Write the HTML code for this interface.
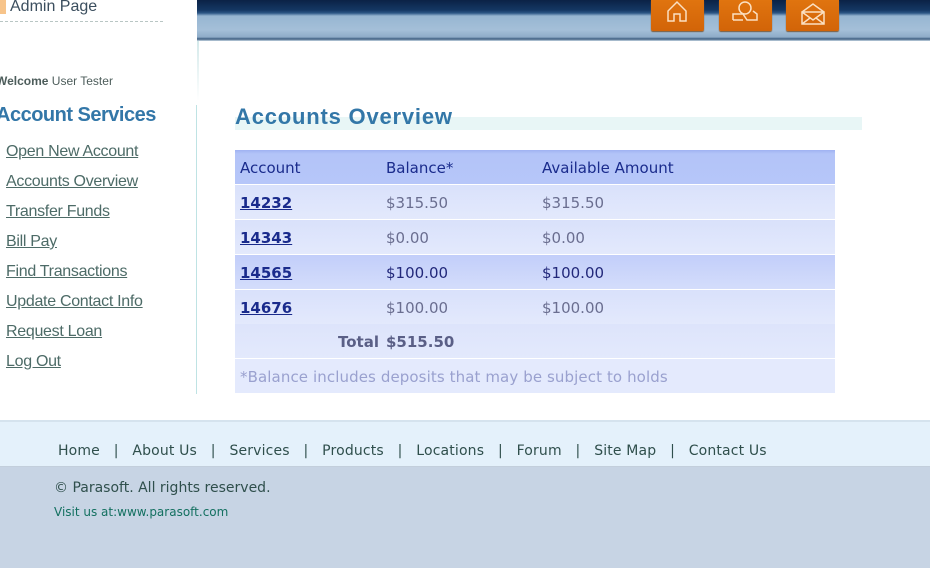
<!DOCTYPE html>
<html><head><meta charset="utf-8"><style>
*{margin:0;padding:0;box-sizing:border-box}
body{width:930px;height:578px;position:relative;background:#fff;font-family:"Liberation Sans",sans-serif;overflow:hidden}
.a{position:absolute}
.hdr{left:197px;top:0;width:733px;height:41px;background:linear-gradient(#0b2246 0,#143763 10px,#2c5685 13px,#97b6d2 16px,#a4bfd8 30px,#8eacc8 37px,#3d5d80 39px,#c9d9e6 41px)}
.btn{top:0;width:53px;height:31px;background:linear-gradient(#e0740f,#d26408);border-radius:0 0 2px 2px;box-shadow:0 1px 1px #7a5a3a}
.menu a{display:block;position:absolute;left:6px;color:#4d6b67;text-decoration:underline;font-size:16px;letter-spacing:-0.3px}
.tb{left:235px;width:600px;font-family:"DejaVu Sans",sans-serif;font-size:15px}
.r{position:absolute;left:0;width:600px;height:34px}
.r span{position:absolute;top:9px}
.c1{left:5px}.c2{left:151px}.c3{left:307px}
.lk{color:#1a2b8c;text-decoration:underline;font-weight:bold;letter-spacing:0px}
</style></head><body>
<div class="a" style="left:0;top:0;width:6px;height:14px;background:#f7c48a"></div>
<div class="a" style="left:10px;top:-2px;font-size:16px;color:#3b4e5e">Admin Page</div>
<div class="a" style="left:0;top:21px;width:163px;border-top:1px dashed #b9c6c4"></div>
<div class="a hdr"></div>
<div class="a btn" style="left:651px"><svg width="53" height="31"><path d="M17 21V11l9-9 9 9v10h-6v-7h-6v7z" fill="none" stroke="#fbe0c2" stroke-width="1.5"/></svg></div>
<div class="a btn" style="left:719px"><svg width="53" height="31"><circle cx="26" cy="8" r="6" fill="none" stroke="#fbe0c2" stroke-width="1.5"/><path d="M14 20v-6h10l4 6h10v-6l-4-3M14 20h10" fill="none" stroke="#fbe0c2" stroke-width="1.5"/></svg></div>
<div class="a btn" style="left:786px"><svg width="53" height="31"><path d="M16 12h22v12H16zM16 12l11 8 11-8M16 24l8-6M38 24l-8-6M16 12l11-8 11 8" fill="none" stroke="#fbe0c2" stroke-width="1.5"/></svg></div>
<div class="a" style="left:197px;top:41px;width:2px;height:60px;background:linear-gradient(#d4e9ea,#fff)"></div>
<div class="a" style="left:-4px;top:74px;font-size:12px;color:#4d5d5b"><b>Welcome</b> User Tester</div>
<div class="a" style="left:-4px;top:104px;font-size:20px;font-weight:bold;color:#3377a8;letter-spacing:-0.5px">Account Services</div>
<div class="a" style="left:196px;top:105px;width:1px;height:289px;background:#bfe3e4"></div>
<div class="menu">
<a style="top:143px">Open New Account</a><a style="top:173px">Accounts Overview</a><a style="top:203px">Transfer Funds</a><a style="top:233px">Bill Pay</a><a style="top:263px">Find Transactions</a><a style="top:293px">Update Contact Info</a><a style="top:323px">Request Loan</a><a style="top:353px">Log Out</a>
</div>
<div class="a" style="left:235px;top:117px;width:627px;height:13px;background:#e8f6f6"></div>
<div class="a" style="left:235px;top:104px;font-size:22px;font-weight:bold;color:#3377a8;letter-spacing:0.8px">Accounts Overview</div>
<div class="a tb" style="top:150px;height:243px">
<div class="r" style="top:0;height:34px;background:linear-gradient(#9fb2f2,#b3c4f8 4px,#b6c6f9);color:#1a2b8c"><span class="c1">Account</span><span class="c2">Balance*</span><span class="c3">Available Amount</span></div>
<div class="r" style="top:35px;background:linear-gradient(#d9e1fb,#e3e9fc);color:#6a6e90"><span class="c1 lk">14232</span><span class="c2">$315.50</span><span class="c3">$315.50</span></div>
<div class="r" style="top:70px;background:linear-gradient(#d9e1fb,#e3e9fc);color:#6a6e90"><span class="c1 lk">14343</span><span class="c2">$0.00</span><span class="c3">$0.00</span></div>
<div class="r" style="top:105px;background:linear-gradient(#c2cefa,#d4ddfb);color:#22287a"><span class="c1 lk">14565</span><span class="c2">$100.00</span><span class="c3">$100.00</span></div>
<div class="r" style="top:140px;background:linear-gradient(#d9e1fb,#e3e9fc);color:#6a6e90"><span class="c1 lk">14676</span><span class="c2">$100.00</span><span class="c3">$100.00</span></div>
<div class="r" style="top:174px;background:linear-gradient(#dde4fb,#e3e9fc);color:#5a5f86;font-weight:bold"><span style="left:103px">Total</span><span class="c2">$515.50</span></div>
<div class="r" style="top:209px;background:#e4eafd;color:#9aa1cf"><span class="c1" style="letter-spacing:0.1px">*Balance includes deposits that may be subject to holds</span></div>
</div>
<div class="a" style="left:0;top:420px;width:930px;height:2px;background:#d5e3ee"></div>
<div class="a" style="left:0;top:422px;width:930px;height:45px;background:#e4f1fb"></div>
<div class="a" style="left:0;top:466px;width:930px;height:102px;background:#c7d4e4;border-top:1px solid #c3cfdc"></div>
<div class="a" style="left:58px;top:443px;font-family:'DejaVu Sans',sans-serif;font-size:14px;color:#2f4f4c;letter-spacing:0.15px;white-space:pre">Home   |   About Us   |   Services   |   Products   |   Locations   |   Forum   |   Site Map   |   Contact Us</div>
<div class="a" style="left:54px;top:480px;font-family:'DejaVu Sans',sans-serif;font-size:14px;color:#2f4f4c">© Parasoft. All rights reserved.</div>
<div class="a" style="left:54px;top:505px;font-family:'DejaVu Sans',sans-serif;font-size:12px;color:#137060">Visit us at:www.parasoft.com</div>
</body></html>
